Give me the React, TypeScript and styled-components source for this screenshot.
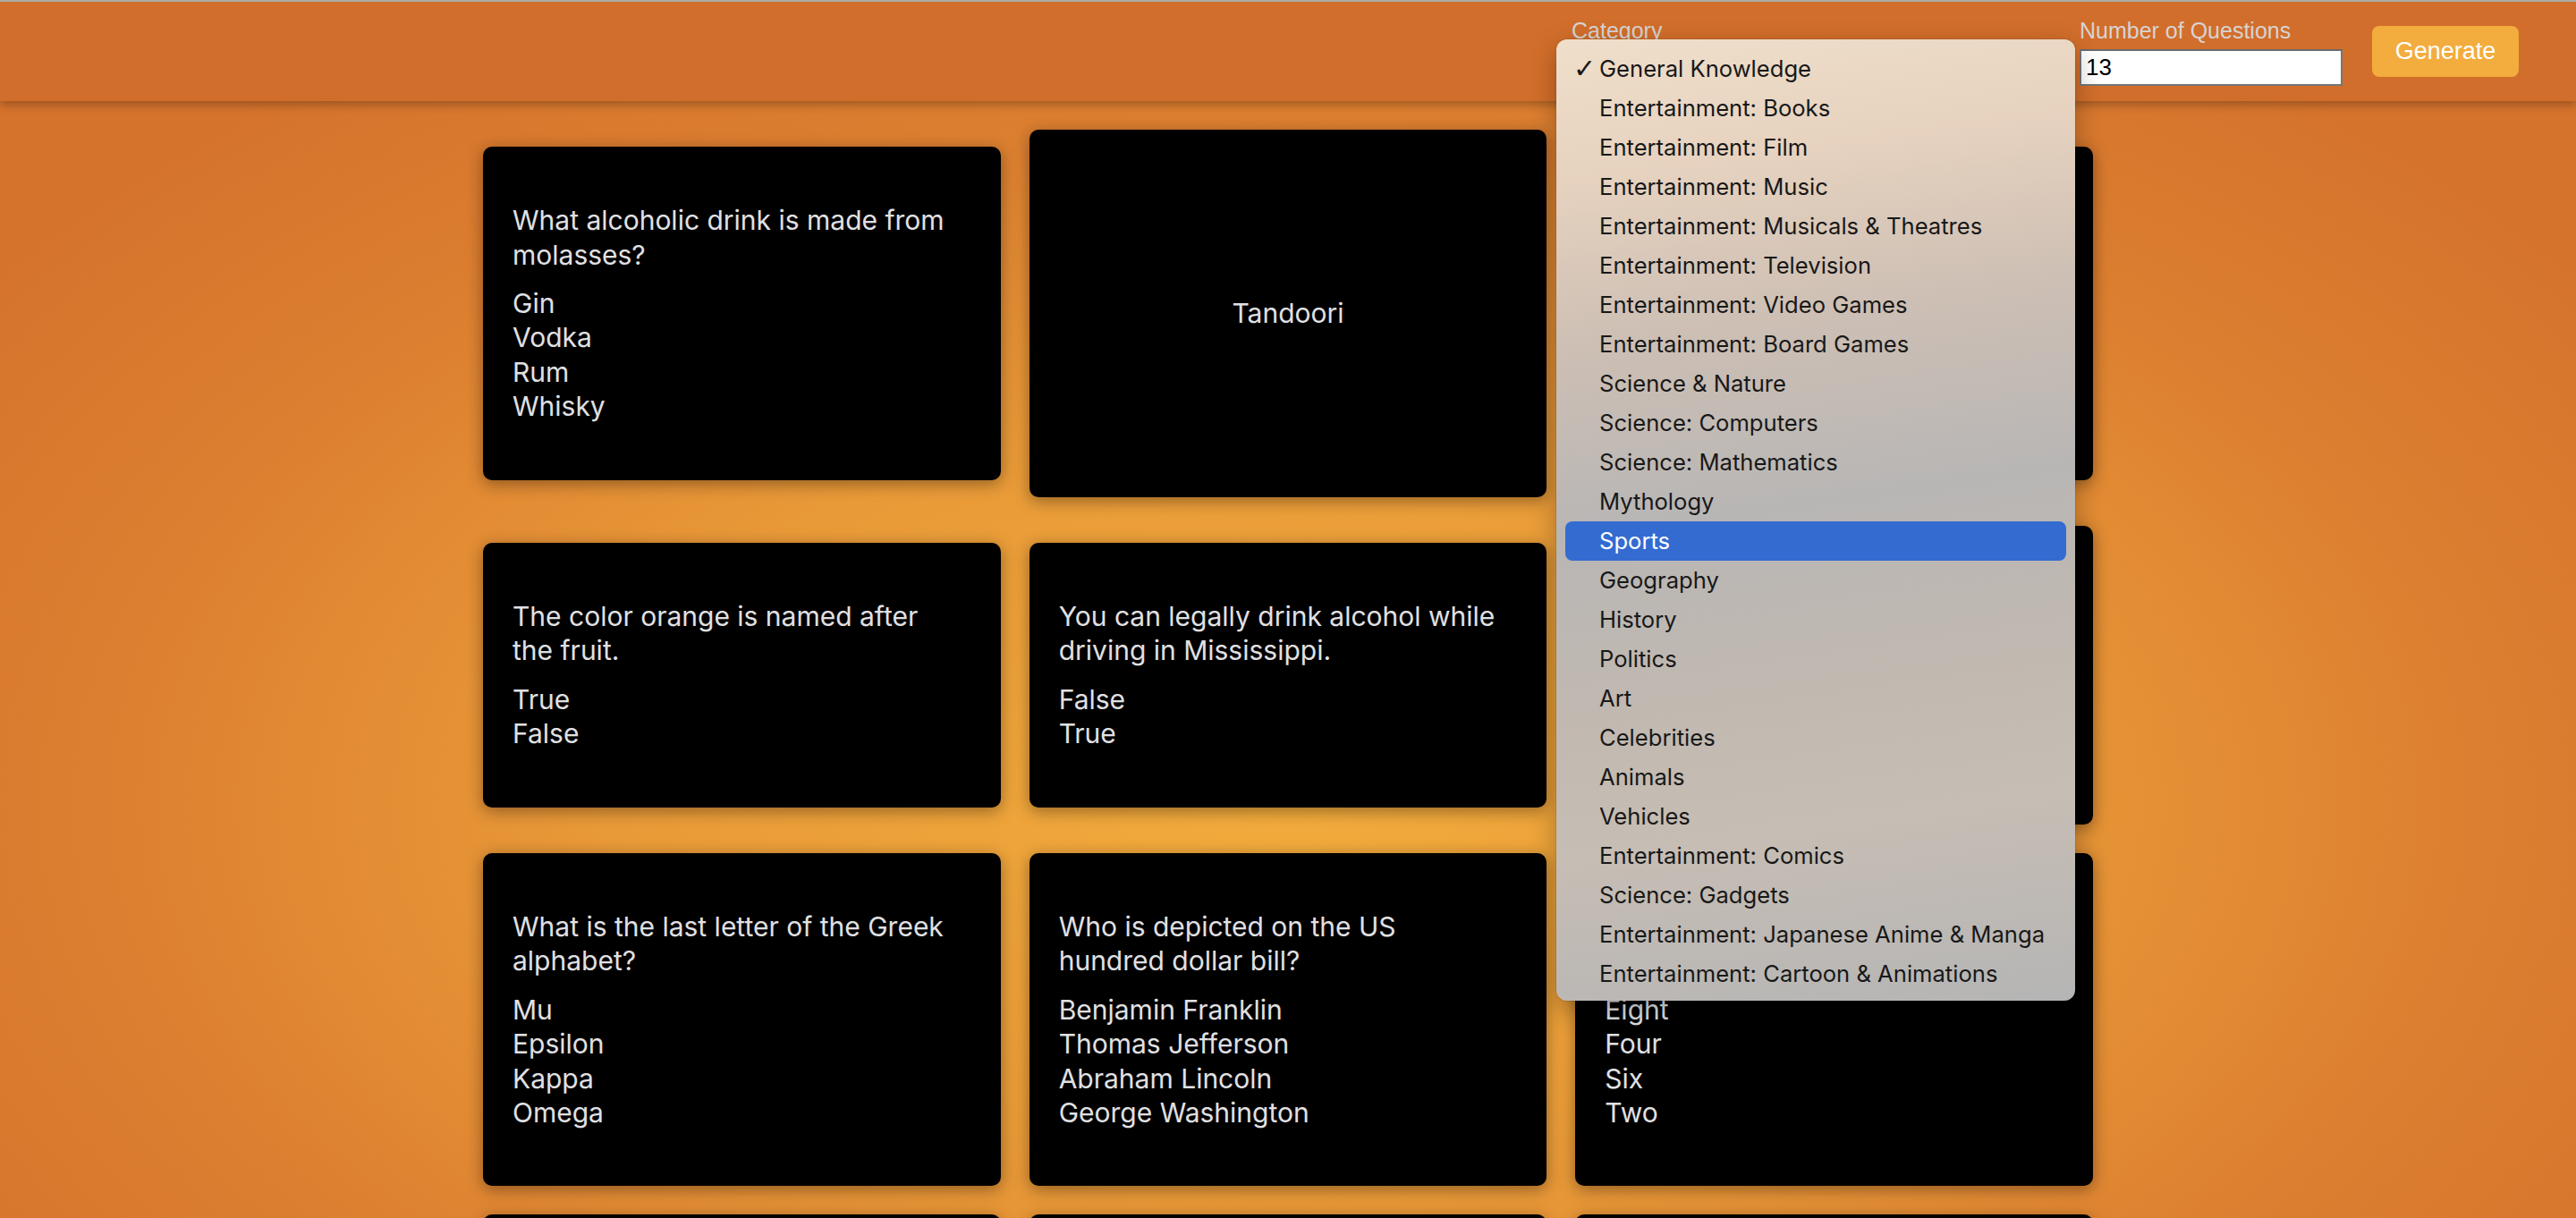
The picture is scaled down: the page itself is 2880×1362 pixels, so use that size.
import React from "react";
import styled, { createGlobalStyle } from "styled-components";

const GlobalStyle = createGlobalStyle`
  *, *::before, *::after { box-sizing: border-box; }
  html, body { margin: 0; padding: 0; }
  body { font-family: Inter, "Noto Sans", sans-serif; background: #d9792e; }
`;

const Page = styled.div`
  height: 100vh;
  overflow: hidden;
  background: radial-gradient(ellipse 62% 75% at 50% 66%, #f2ab3c 0%, #e99a38 42%, #dc7f30 75%, #d5732d 100%);
`;

const Header = styled.header`
  position: relative;
  z-index: 2;
  height: 113px;
  border-top: 2px solid #a9aca3;
  background: #d26e2b;
  box-shadow: 0 4px 10px rgba(0, 0, 0, 0.28);
  display: flex;
  justify-content: flex-end;
  align-items: center;
  gap: 33px;
  padding-right: 64px;
  font-family: "Liberation Sans", Arial, sans-serif;
`;

const Field = styled.div`
  position: relative;
  display: flex;
  flex-direction: column;
  gap: 8px;
`;

const Label = styled.label`
  font-size: 25px;
  line-height: 27px;
  color: #d7d3d3;
  transform: translateY(1px);
`;

const Select = styled.select<{ $w: number }>`
  width: ${(p) => p.$w}px;
  height: 41px;
  font-size: 24px;
  font-family: "Liberation Sans", Arial, sans-serif;
`;

const NumberInput = styled.input`
  width: 294px;
  height: 41px;
  border: 2px solid #767676;
  border-top-color: #6a6a6a;
  background: #fff;
  padding: 0 5px;
  font-size: 26px;
  font-family: "Liberation Sans", Arial, sans-serif;
  color: #000;
`;

const GenerateButton = styled.button`
  width: 164px;
  height: 57px;
  border: none;
  border-radius: 8px;
  background: #f3ac3e;
  color: #fff;
  font-size: 27px;
  font-family: "Liberation Sans", Arial, sans-serif;
`;

const Popup = styled.ul`
  position: absolute;
  top: 24px;
  left: -17px;
  width: 580px;
  margin: 0;
  padding: 11px 10px 8px;
  list-style: none;
  border-radius: 12px;
  background: linear-gradient(172deg, #efdfca 0%, #e6d2bf 14%, #cdbfb4 30%, #b8b6b5 48%, #c2b9b0 68%, #c6bdb4 80%, #b5b5b5 100%);
  box-shadow: 0 10px 30px rgba(0, 0, 0, 0.3), 0 0 0 1px rgba(0, 0, 0, 0.08);
  z-index: 5;
  font-family: Inter, "Noto Sans", sans-serif;
`;

const Option = styled.li<{ $active?: boolean }>`
  display: flex;
  align-items: center;
  height: 44px;
  padding-left: 9px;
  border-radius: 8px;
  font-size: 25.6px;
  color: ${(p) => (p.$active ? "#ffffff" : "#181818")};
  background: ${(p) => (p.$active ? "#346bd1" : "transparent")};
`;

const Check = styled.span`
  width: 29px;
  font-size: 30px;
  font-weight: 700;
  font-family: "DejaVu Sans", sans-serif;
  color: #1a1a1a;
`;

const Grid = styled.main`
  width: 1800px;
  margin: 32px auto 0;
  display: grid;
  grid-template-columns: repeat(3, 1fr);
  gap: 32px;
  align-items: center;
`;

const Card = styled.div`
  display: grid;
  background: #000;
  border-radius: 10px;
  box-shadow: 0 4px 18px rgba(0, 0, 0, 0.38);
  padding: 63px 45px 63px 33px;
  color: #e0e0e3;
  font-size: 30px;
  line-height: 38.4px;
`;

const Face = styled.div<{ $hidden?: boolean; $center?: boolean }>`
  grid-area: 1 / 1;
  visibility: ${(p) => (p.$hidden ? "hidden" : "visible")};
  display: flex;
  flex-direction: column;
  justify-content: ${(p) => (p.$center ? "center" : "flex-start")};
  align-items: ${(p) => (p.$center ? "center" : "stretch")};
  margin-right: ${(p) => (p.$center ? "-12px" : "0")};
`;

const Question = styled.p`
  margin: 0 0 16px;
`;

const Answers = styled.ul`
  margin: 0;
  padding: 0;
  list-style: none;
`;

const categories = [
  "General Knowledge",
  "Entertainment: Books",
  "Entertainment: Film",
  "Entertainment: Music",
  "Entertainment: Musicals & Theatres",
  "Entertainment: Television",
  "Entertainment: Video Games",
  "Entertainment: Board Games",
  "Science & Nature",
  "Science: Computers",
  "Science: Mathematics",
  "Mythology",
  "Sports",
  "Geography",
  "History",
  "Politics",
  "Art",
  "Celebrities",
  "Animals",
  "Vehicles",
  "Entertainment: Comics",
  "Science: Gadgets",
  "Entertainment: Japanese Anime & Manga",
  "Entertainment: Cartoon & Animations",
];

type Q = { q: string; a: string[]; flipped?: string };

const questions: Q[] = [
  { q: "What alcoholic drink is made from molasses?", a: ["Gin", "Vodka", "Rum", "Whisky"] },
  {
    q: "Which of these is a style of cooking that is named after the cylindrical clay oven it uses?",
    a: ["Tandoori", "Balti", "Korma", "Vindaloo"],
    flipped: "Tandoori",
  },
  { q: "Which of these is the capital city of Australia?", a: ["Sydney", "Canberra", "Melbourne", "Perth"] },
  { q: "The color orange is named after the fruit.", a: ["True", "False"] },
  { q: "You can legally drink alcohol while driving in Mississippi.", a: ["False", "True"] },
  { q: "The Great Wall of China is visible from the Moon with the naked eye from orbit.", a: ["False", "True"] },
  { q: "What is the last letter of the Greek alphabet?", a: ["Mu", "Epsilon", "Kappa", "Omega"] },
  {
    q: "Who is depicted on the US hundred dollar bill?",
    a: ["Benjamin Franklin", "Thomas Jefferson", "Abraham Lincoln", "George Washington"],
  },
  { q: "How many legs does a spider have in total?", a: ["Eight", "Four", "Six", "Two"] },
  { q: "What is the chemical symbol for the element gold?", a: ["Au", "Ag", "Gd", "Go"] },
  { q: "Which planet is known as the Red Planet?", a: ["Mars", "Venus", "Jupiter", "Saturn"] },
  { q: "What is the largest ocean on Earth?", a: ["Pacific", "Atlantic", "Indian", "Arctic"] },
  { q: "How many continents are there on Earth?", a: ["Seven", "Five", "Six", "Eight"] },
];

function QuizCard({ item }: { item: Q }) {
  return (
    <Card>
      <Face $hidden={!!item.flipped}>
        <Question>{item.q}</Question>
        <Answers>
          {item.a.map((a) => (
            <li key={a}>{a}</li>
          ))}
        </Answers>
      </Face>
      {item.flipped && <Face $center>{item.flipped}</Face>}
    </Card>
  );
}

export default function App() {
  return (
    <>
      <GlobalStyle />
      <Page>
        <Header>
          <Field>
            <Label>Category</Label>
            <Select $w={535} defaultValue="General Knowledge">
              {categories.map((c) => (
                <option key={c}>{c}</option>
              ))}
            </Select>
            <Popup>
              {categories.map((c, i) => (
                <Option key={c} $active={c === "Sports"}>
                  <Check>{i === 0 ? "✓" : ""}</Check>
                  {c}
                </Option>
              ))}
            </Popup>
          </Field>
          <Field>
            <Label>Number of Questions</Label>
            <NumberInput type="text" defaultValue="13" />
          </Field>
          <GenerateButton>Generate</GenerateButton>
        </Header>
        <Grid>
          {questions.map((q, i) => (
            <QuizCard key={i} item={q} />
          ))}
        </Grid>
      </Page>
    </>
  );
}
